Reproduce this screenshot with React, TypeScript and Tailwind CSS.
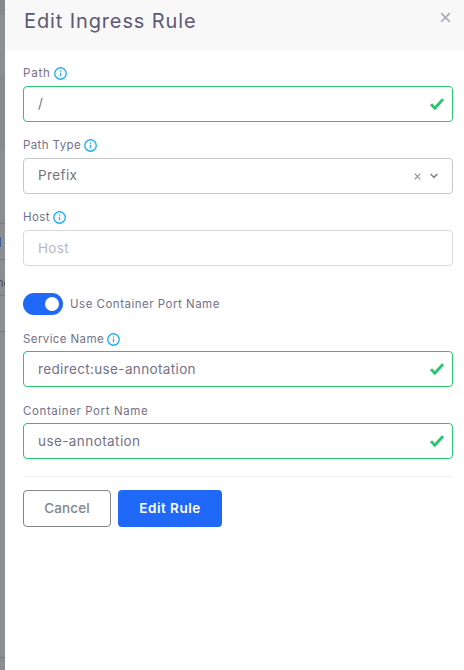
import type { ReactNode } from 'react';

function InfoIcon() {
  return (
    <svg width="13" height="13" viewBox="0 0 13 13" fill="none" className="shrink-0">
      <circle cx="6.5" cy="6.5" r="5.75" stroke="#1fb0ee" strokeWidth="1.35" />
      <path d="M6.5 5.8V9.3M6.5 3.6V4.8" stroke="#1fb0ee" strokeWidth="1.3" />
    </svg>
  );
}

function CheckIcon() {
  return (
    <svg width="14" height="12" viewBox="0 0 14 12" fill="none" className="shrink-0">
      <path d="M1 6.3L4.8 10.2L13 1.2" stroke="#28c76f" strokeWidth="2.9" />
    </svg>
  );
}

function Label({ children, info = true, className = '' }: { children: ReactNode; info?: boolean; className?: string }) {
  return (
    <div className={`mb-1 flex h-[18px] items-center gap-[3px] text-[11.5px] text-[#74718a] ${className}`}>
      {children}
      {info && <InfoIcon />}
    </div>
  );
}

function Field({ children, border, valid = false }: { children: ReactNode; border: string; valid?: boolean }) {
  return (
    <div className={`flex h-9 items-center justify-between rounded-[4px] border pr-2 pl-[14px] text-[13.5px] ${border}`}>
      {children}
      {valid && <CheckIcon />}
    </div>
  );
}

export default function App() {
  return (
    <div className="flex h-[670px] w-[464px] overflow-hidden bg-white font-['Inter','Liberation_Sans',sans-serif]">
      <aside className="flex w-[5px] shrink-0 flex-col overflow-hidden bg-[#8b8f92] text-[11px] leading-none text-[#4d4d60]">
        <div className="h-[15px] bg-[#85898c]" />
        <div className="h-[60px]" />
        <div className="h-[75px] bg-[#868b8d]" />
        <div className="h-[73px]" />
        <div className="h-px shrink-0 bg-[#787c80]" />
        <div className="flex h-[35px] items-center"><span className="h-[10px] w-px bg-[#425d9b]" /></div>
        <div className="h-px shrink-0 bg-[#787c80]" />
        <div className="flex h-[35px] items-center"><span className="-ml-[3px] mt-3">ne</span></div>
        <div className="h-px shrink-0 bg-[#787c80]" />
        <div className="h-[35px]" />
        <div className="h-px shrink-0 bg-[#787c80]" />
        <div className="h-[325px]" />
        <div className="h-px shrink-0 bg-[#787c80]" />
      </aside>
      <main className="flex-1">
        <header className="flex h-[50px] items-start justify-between bg-[#f8f8f8] pr-[13px] pl-[19px]">
          <h1 className="mt-[6px] text-[20px] leading-[30px] tracking-[0.88px] text-[#5e5873]">Edit Ingress Rule</h1>
          <svg width="11" height="11" viewBox="0 0 11 11" fill="none" className="mt-3">
            <path d="M1.2 1.2L9.8 9.8M9.8 1.2L1.2 9.8" stroke="#aeacba" strokeWidth="1.8" />
          </svg>
        </header>
        <div className="pt-[14px] pr-[11px] pl-[18px]">
          <div className="flex flex-col gap-[14px]">
            <div>
              <Label><span className="pt-[2px] tracking-[0.8px]">Path</span></Label>
              <Field border="border-[#28c76f]" valid><span className="pb-[2px] text-[#74718a]">/</span></Field>
            </div>
            <div>
              <Label><span className="pt-[2px] tracking-[0.4px]">Path Type</span></Label>
              <Field border="border-[#c8c8ca]">
                <span className="pb-[2px] tracking-[0.4px] text-[#74747c]">Prefix</span>
                <span className="mr-[6px] flex items-center gap-[9px]">
                  <svg width="7" height="7" viewBox="0 0 7 7" fill="none">
                    <path d="M.7 .7L6.3 6.3M6.3 .7L.7 6.3" stroke="#929292" strokeWidth="1.2" />
                  </svg>
                  <svg width="8" height="6" viewBox="0 0 8 6" fill="none">
                    <path d="M.6 1L4 4.3L7.4 1" stroke="#828282" strokeWidth="1.6" />
                  </svg>
                </span>
              </Field>
            </div>
            <div>
              <Label><span className="pt-[2px] tracking-[0.45px]">Host</span></Label>
              <Field border="border-[#d8d6de]"><span className="tracking-[0.3px] text-[#b9b9c3]">Host</span></Field>
            </div>
          </div>
          <div className="mt-[27px] flex h-[22px] items-center gap-[7px]">
            <div className="flex h-[22px] w-10 items-center justify-end rounded-full bg-[#2069f8] pr-1">
              <div className="h-[14px] w-[14px] rounded-full bg-white" />
            </div>
            <span className="pt-[2px] text-[11.5px] tracking-[0.5px] text-[#74718a]">Use Container Port Name</span>
          </div>
          <div className="mt-[14px] flex flex-col gap-[14px]">
            <div>
              <Label className="pt-[2px]"><span className="pt-[2px] tracking-[0.4px]">Service Name</span></Label>
              <Field border="border-[#28c76f]" valid><span className="tracking-[0.36px] text-[#74718a]">redirect:use-annotation</span></Field>
            </div>
            <div>
              <Label info={false} className="pt-[2px]"><span className="pt-[2px] tracking-[0.6px]">Container Port Name</span></Label>
              <Field border="border-[#28c76f]" valid><span className="tracking-[0.42px] text-[#74718a]">use-annotation</span></Field>
            </div>
          </div>
          <div className="mt-[17px] h-px bg-[#f0f0f2]" />
          <div className="mt-[13px] flex gap-[7px] text-[13.5px]">
            <button className="h-[37px] w-[88px] rounded-[4px] border border-[#82868b] font-medium tracking-[0.15px] text-[#82868b]">Cancel</button>
            <button className="h-[37px] w-[104px] rounded-[4px] bg-[#2069f8] font-semibold tracking-[0.5px] text-white">Edit Rule</button>
          </div>
        </div>
      </main>
    </div>
  );
}
